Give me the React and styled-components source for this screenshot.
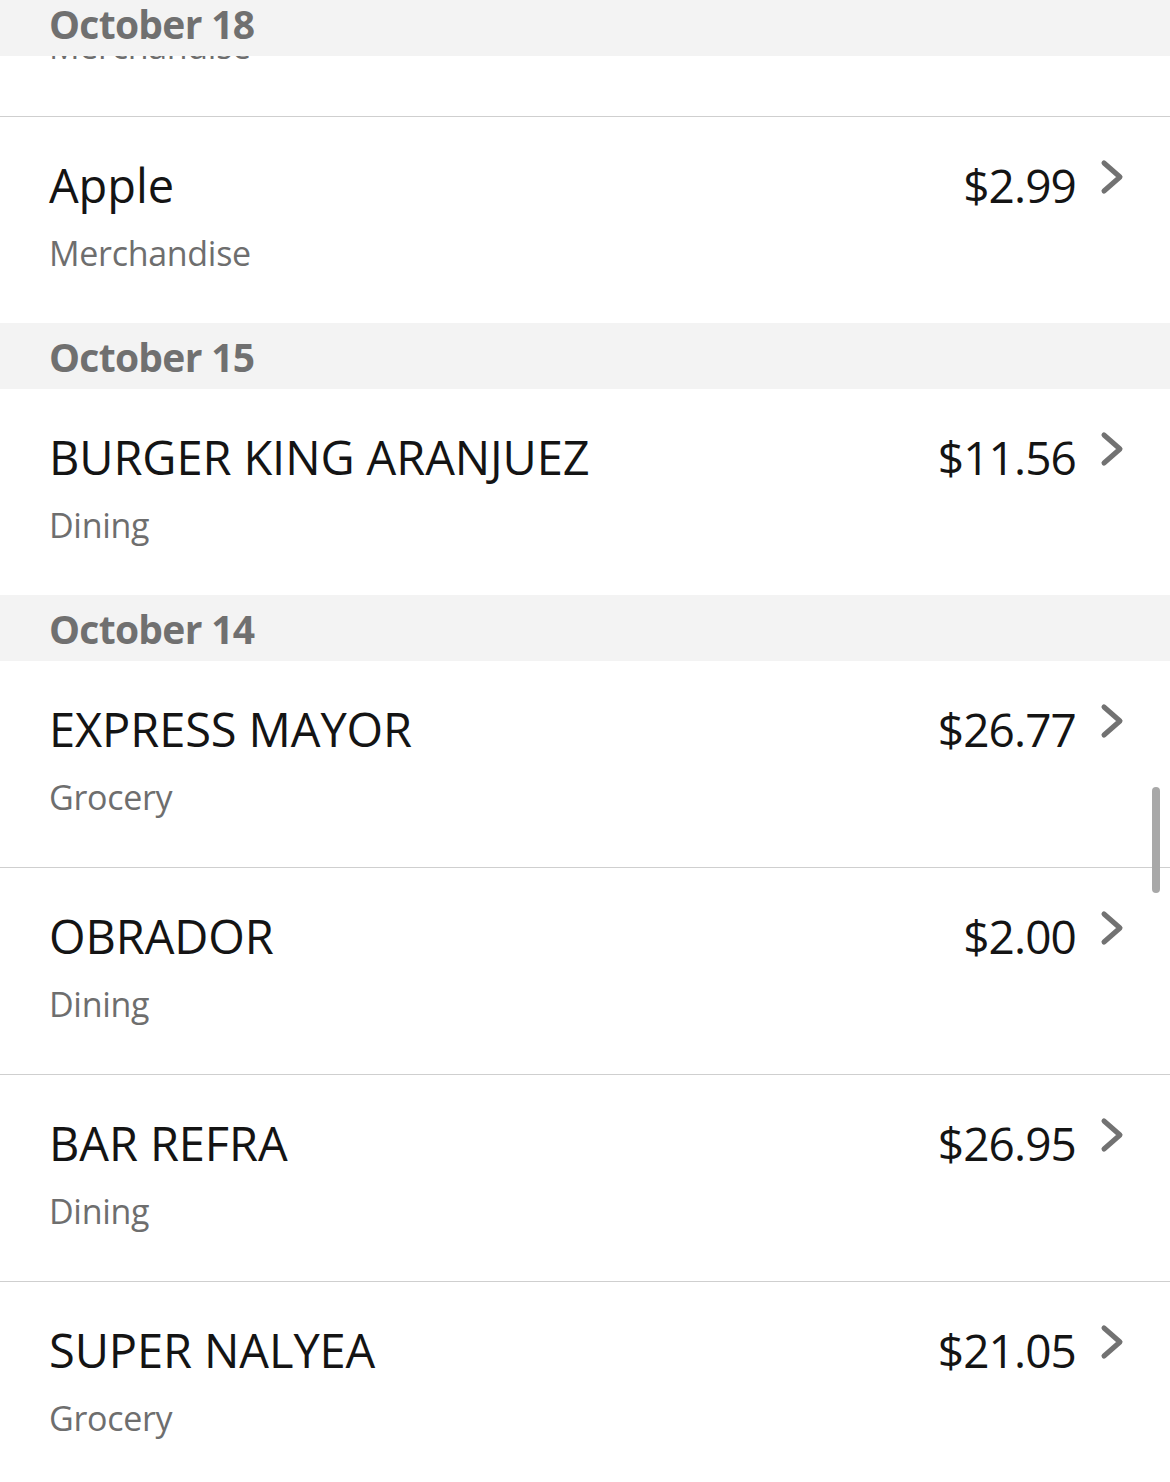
import React from "react";
import styled, { createGlobalStyle } from "styled-components";

const GlobalStyle = createGlobalStyle`
  html, body {
    margin: 0;
    padding: 0;
    background: #fff;
  }
  body {
    font-family: "Open Sans", "Noto Sans", sans-serif;
    -webkit-font-smoothing: antialiased;
  }
`;

const Screen = styled.div`
  position: relative;
  width: 1170px;
  height: 1482px;
  overflow: hidden;
  background: #fff;
`;

// scrolled list: the first row of October 18 is partly off screen
const List = styled.div`
  margin-top: -90px;
  display: flex;
  flex-direction: column;
`;

const Section = styled.section`
  display: flex;
  flex-direction: column;
`;

const DateHeader = styled.div`
  height: 66px;
  background: #f3f3f3;
  display: flex;
  align-items: center;
  padding-left: 49px;
  font-size: 39px;
  font-weight: 700;
  color: #707070;
  letter-spacing: -0.7px;
`;

const PinnedHeader = styled(DateHeader)`
  position: absolute;
  top: -10px;
  left: 0;
  right: 0;
  z-index: 2;
`;

const Row = styled.div`
  box-sizing: border-box;
  display: flex;
  align-items: flex-start;
  padding: 36px 46px 0 49px;
  border-top: ${(p) => (p.$divider ? "1px solid #cfcfcf" : "none")};
  height: ${(p) => (p.$divider ? "207px" : "206px")};
`;

const Info = styled.div`
  flex: 1;
  display: flex;
  flex-direction: column;
`;

const Title = styled.div`
  font-size: 47px;
  line-height: 64px;
  color: #141414;
  letter-spacing: -0.1px;
`;

const Category = styled.div`
  margin-top: 13px;
  font-size: 34px;
  line-height: 46px;
  color: #6e6e6e;
  letter-spacing: -0.3px;
`;

const Amount = styled.div`
  display: flex;
  align-items: flex-start;
  gap: 24px;
`;

const Price = styled.div`
  font-size: 46px;
  line-height: 64px;
  color: #141414;
  letter-spacing: -0.9px;
`;

const Chevron = styled.svg`
  width: 24px;
  height: 36px;
  margin-top: 6px;
`;

const ScrollThumb = styled.div`
  position: absolute;
  top: 787px;
  right: 10px;
  width: 8px;
  height: 106px;
  border-radius: 4px;
  background: #a8a8a8;
`;

const sections = [
  {
    date: "October 18",
    items: [
      { name: "Amazon.com", category: "Merchandise", amount: "$14.99" },
      { name: "Apple", category: "Merchandise", amount: "$2.99" },
    ],
  },
  {
    date: "October 15",
    items: [
      { name: "BURGER KING ARANJUEZ", category: "Dining", amount: "$11.56" },
    ],
  },
  {
    date: "October 14",
    items: [
      { name: "EXPRESS MAYOR", category: "Grocery", amount: "$26.77" },
      { name: "OBRADOR", category: "Dining", amount: "$2.00" },
      { name: "BAR REFRA", category: "Dining", amount: "$26.95" },
      { name: "SUPER NALYEA", category: "Grocery", amount: "$21.05" },
    ],
  },
];

function ChevronIcon() {
  return (
    <Chevron viewBox="0 0 24 36">
      <path
        d="M4 4 L20 18 L4 32"
        fill="none"
        stroke="#727272"
        strokeWidth="5"
        strokeLinecap="round"
        strokeLinejoin="round"
      />
    </Chevron>
  );
}

function Transaction({ item, divider }) {
  return (
    <Row $divider={divider}>
      <Info>
        <Title>{item.name}</Title>
        <Category>{item.category}</Category>
      </Info>
      <Amount>
        <Price>{item.amount}</Price>
        <ChevronIcon />
      </Amount>
    </Row>
  );
}

export default function App() {
  return (
    <>
      <GlobalStyle />
      <Screen>
        <List>
          {sections.map((section, si) => (
            <Section key={section.date}>
              {si > 0 && <DateHeader>{section.date}</DateHeader>}
              {section.items.map((item, i) => (
                <Transaction key={item.name} item={item} divider={i > 0} />
              ))}
            </Section>
          ))}
        </List>
        <PinnedHeader>October 18</PinnedHeader>
        <ScrollThumb />
      </Screen>
    </>
  );
}
